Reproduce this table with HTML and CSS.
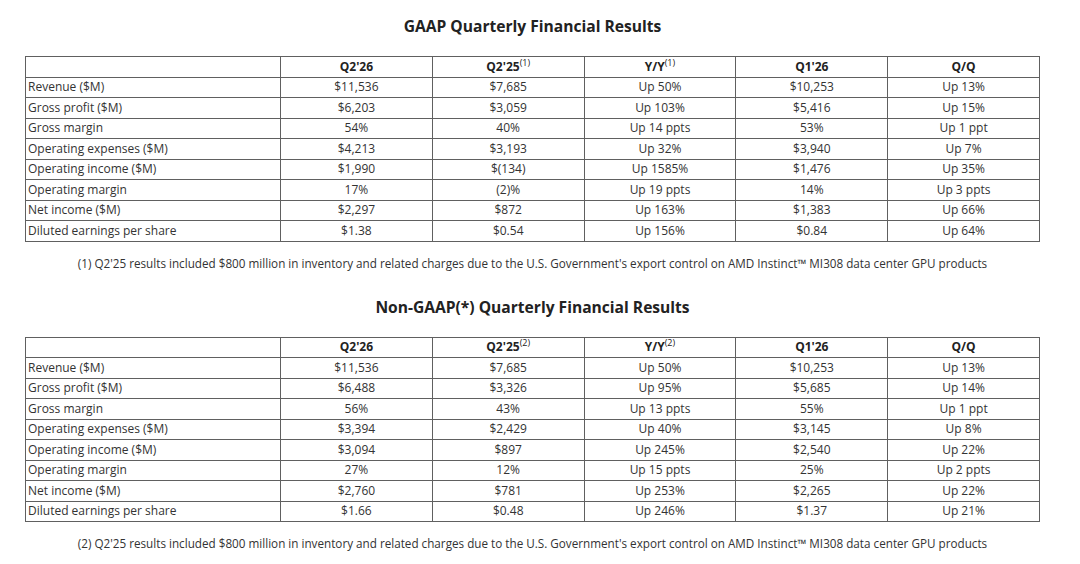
FILE: index.html
```html
<!DOCTYPE html>
<html>
<head>
<meta charset="utf-8">
<link rel="stylesheet" href="styles.css">
</head>
<body>
<div class="page">
  <section class="block">
    <h2 class="title">GAAP Quarterly Financial Results</h2>
    <table class="fin">
      <thead>
        <tr><th class="label"></th><th>Q2'26</th><th>Q2'25<sup>(1)</sup></th><th>Y/Y<sup>(1)</sup></th><th>Q1'26</th><th>Q/Q</th></tr>
      </thead>
      <tbody>
        <tr><td class="label">Revenue ($M)</td><td>$11,536</td><td>$7,685</td><td>Up 50%</td><td>$10,253</td><td>Up 13%</td></tr>
        <tr><td class="label">Gross profit ($M)</td><td>$6,203</td><td>$3,059</td><td>Up 103%</td><td>$5,416</td><td>Up 15%</td></tr>
        <tr><td class="label">Gross margin</td><td>54%</td><td>40%</td><td>Up 14 ppts</td><td>53%</td><td>Up 1 ppt</td></tr>
        <tr><td class="label">Operating expenses ($M)</td><td>$4,213</td><td>$3,193</td><td>Up 32%</td><td>$3,940</td><td>Up 7%</td></tr>
        <tr><td class="label">Operating income ($M)</td><td>$1,990</td><td>$(134)</td><td>Up 1585%</td><td>$1,476</td><td>Up 35%</td></tr>
        <tr><td class="label">Operating margin</td><td>17%</td><td>(2)%</td><td>Up 19 ppts</td><td>14%</td><td>Up 3 ppts</td></tr>
        <tr><td class="label">Net income ($M)</td><td>$2,297</td><td>$872</td><td>Up 163%</td><td>$1,383</td><td>Up 66%</td></tr>
        <tr><td class="label">Diluted earnings per share</td><td>$1.38</td><td>$0.54</td><td>Up 156%</td><td>$0.84</td><td>Up 64%</td></tr>
      </tbody>
    </table>
    <p class="note">(1) Q2'25 results included $800 million in inventory and related charges due to the U.S. Government's export control on AMD Instinct™ MI308 data center GPU products</p>
  </section>
  <section class="block">
    <h2 class="title">Non-GAAP(*) Quarterly Financial Results</h2>
    <table class="fin">
      <thead>
        <tr><th class="label"></th><th>Q2'26</th><th>Q2'25<sup>(2)</sup></th><th>Y/Y<sup>(2)</sup></th><th>Q1'26</th><th>Q/Q</th></tr>
      </thead>
      <tbody>
        <tr><td class="label">Revenue ($M)</td><td>$11,536</td><td>$7,685</td><td>Up 50%</td><td>$10,253</td><td>Up 13%</td></tr>
        <tr><td class="label">Gross profit ($M)</td><td>$6,488</td><td>$3,326</td><td>Up 95%</td><td>$5,685</td><td>Up 14%</td></tr>
        <tr><td class="label">Gross margin</td><td>56%</td><td>43%</td><td>Up 13 ppts</td><td>55%</td><td>Up 1 ppt</td></tr>
        <tr><td class="label">Operating expenses ($M)</td><td>$3,394</td><td>$2,429</td><td>Up 40%</td><td>$3,145</td><td>Up 8%</td></tr>
        <tr><td class="label">Operating income ($M)</td><td>$3,094</td><td>$897</td><td>Up 245%</td><td>$2,540</td><td>Up 22%</td></tr>
        <tr><td class="label">Operating margin</td><td>27%</td><td>12%</td><td>Up 15 ppts</td><td>25%</td><td>Up 2 ppts</td></tr>
        <tr><td class="label">Net income ($M)</td><td>$2,760</td><td>$781</td><td>Up 253%</td><td>$2,265</td><td>Up 22%</td></tr>
        <tr><td class="label">Diluted earnings per share</td><td>$1.66</td><td>$0.48</td><td>Up 246%</td><td>$1.37</td><td>Up 21%</td></tr>
      </tbody>
    </table>
    <p class="note">(2) Q2'25 results included $800 million in inventory and related charges due to the U.S. Government's export control on AMD Instinct™ MI308 data center GPU products</p>
  </section>
</div>
</body>
</html>
```

FILE: styles.css
```css
html, body {
  margin: 0;
  padding: 0;
  background: #ffffff;
}
body {
  font-family: "Open Sans", "Liberation Sans", sans-serif;
  color: #333333;
}
.page {
  width: 1015px;
  padding: 15px 40px 0 25px;
}
.block {
  display: flex;
  flex-direction: column;
}
.block + .block {
  margin-top: 23px;
}
.title {
  margin: 0;
  text-align: center;
  font-size: 15.6px;
  line-height: 22px;
  font-weight: 700;
  color: #222222;
}
.fin {
  margin-top: 19px;
  width: 1015px;
  border-collapse: collapse;
  table-layout: fixed;
  font-size: 12px;
}
.fin tr {
  height: 20.5px;
}
.fin th, .fin td {
  border: 1px solid #606060;
  padding: 0 2px;
  text-align: center;
  line-height: 16px;
  white-space: nowrap;
}
.fin th {
  font-weight: 700;
  color: #222222;
}
.fin th.label {
  width: 250px;
}
.fin td.label {
  text-align: left;
  color: #333333;
}
.fin sup {
  font-weight: 400;
  font-size: 9px;
  line-height: 0;
  vertical-align: 5px;
}
.note {
  margin: 11px 0 0;
  text-align: center;
  font-size: 11.7px;
  line-height: 20px;
  color: #333333;
}
```
